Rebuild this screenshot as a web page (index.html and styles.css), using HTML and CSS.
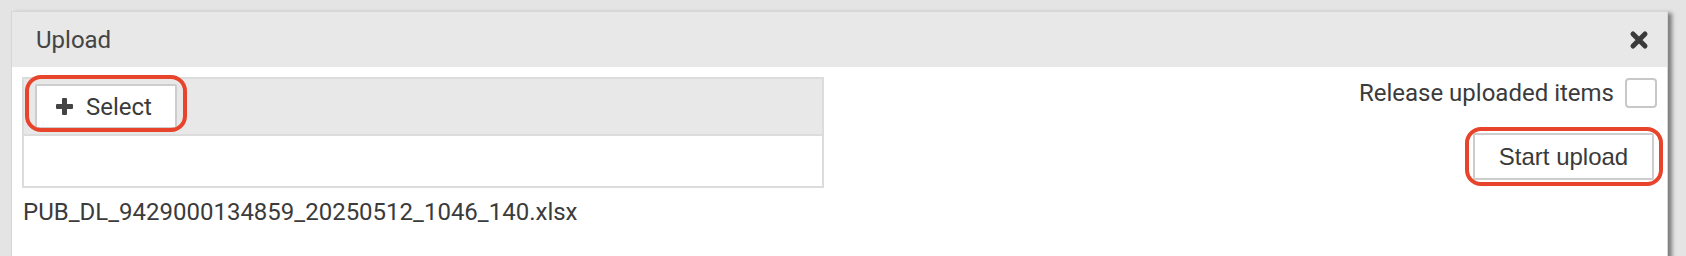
FILE: index.html
```html
<!DOCTYPE html>
<html>
<head>
<meta charset="utf-8">
<link rel="stylesheet" href="styles.css">
</head>
<body>
<div class="dialog">
  <div class="dialog-header">
    <span class="title">Upload</span>
    <svg class="close" width="20" height="20" viewBox="0 0 20 20"><path d="M4 4 L16 16 M16 4 L4 16" stroke="#3a3a3a" stroke-width="5" stroke-linecap="round"/></svg>
  </div>
  <div class="dialog-body">
    <div class="left">
      <div class="filetable">
        <div class="ft-head">
          <div class="annot-wrap">
            <button class="btn btn-select">
              <svg width="17" height="17" viewBox="0 0 17 17"><rect x="6" y="0" width="5" height="17" rx="1" fill="#444"/><rect x="0" y="6" width="17" height="5" rx="1" fill="#444"/></svg>
              <span>Select</span>
            </button>
            <span class="annot annot-select"></span>
          </div>
        </div>
        <div class="ft-body"></div>
      </div>
      <div class="filename">PUB_DL_9429000134859_20250512_1046_140.xlsx</div>
    </div>
    <div class="right">
      <label class="release">
        <span>Release uploaded items</span>
        <span class="checkbox"></span>
      </label>
      <div class="annot-wrap start-wrap">
        <button class="btn btn-start">Start upload</button>
        <span class="annot annot-start"></span>
      </div>
    </div>
  </div>
</div>
</body>
</html>
```

FILE: styles.css
```css
html, body {
  margin: 0;
  padding: 0;
}
body {
  background: #e4e4e4;
  font-family: Roboto, "Liberation Sans", sans-serif;
  color: #3b3b3b;
  width: 1686px;
  height: 256px;
  overflow: hidden;
}
.dialog {
  margin: 11px 0 0 11px;
  width: 1655px;
  height: 280px;
  border: 1px solid #d6d6d6;
  background: #fff;
  box-shadow: 4px 2px 4px rgba(0, 0, 0, 0.45);
}
.dialog-header {
  height: 55px;
  background: #e8e8e8;
  display: flex;
  align-items: center;
  justify-content: space-between;
  padding: 0 18px 0 24px;
}
.title {
  font-size: 24px;
  color: #444;
}
.close {
  display: block;
  margin-top: 1px;
}
.dialog-body {
  display: flex;
  justify-content: space-between;
  padding: 10px 10px 0 10px;
}
.left {
  width: 802px;
}
.filetable {
  border: 2px solid #dcdcdc;
}
.ft-head {
  background: #e8e8e8;
  height: 55px;
  border-bottom: 2px solid #dcdcdc;
  display: flex;
  align-items: center;
  padding-left: 11px;
}
.ft-body {
  height: 50px;
}
.annot-wrap {
  position: relative;
  display: inline-block;
}
.btn {
  display: flex;
  align-items: center;
  background: #fff;
  border: 2px solid #cdcdcd;
  border-radius: 2px;
  font-size: 24px;
  color: #3b3b3b;
  padding: 0;
  margin: 0;
}
.btn-select {
  height: 45px;
  width: 142px;
  padding-left: 19px;
  gap: 13px;
  font-family: Roboto, sans-serif;
  margin-top: 0px;
}
.btn-select svg {
  display: block;
}
.btn-start {
  height: 47px;
  width: 181px;
  justify-content: center;
  font-family: "Liberation Sans", Arial, sans-serif;
  color: #3a3a3a;
}
.annot {
  position: absolute;
  border: 4px solid #e8432b;
  border-radius: 16px;
  pointer-events: none;
}
.annot-select {
  left: -10px;
  right: -10px;
  top: -9px;
  bottom: -3px;
}
.annot-start {
  left: -8px;
  right: -9px;
  top: -6px;
  bottom: -6px;
}
.filename {
  font-size: 24px;
  margin-top: 10px;
  margin-left: 1px;
  line-height: 29px;
  color: #3b3b3b;
}
.right {
  display: flex;
  flex-direction: column;
  align-items: flex-end;
  padding-top: 1px;
}
.release {
  display: flex;
  align-items: center;
  gap: 11px;
  font-size: 24px;
  color: #3b3b3b;
}
.checkbox {
  width: 28px;
  height: 26px;
  border: 2px solid #c8c8c8;
  border-radius: 4px;
  background: #fff;
}
.start-wrap {
  margin-top: 25px;
  margin-right: 3px;
}
```
